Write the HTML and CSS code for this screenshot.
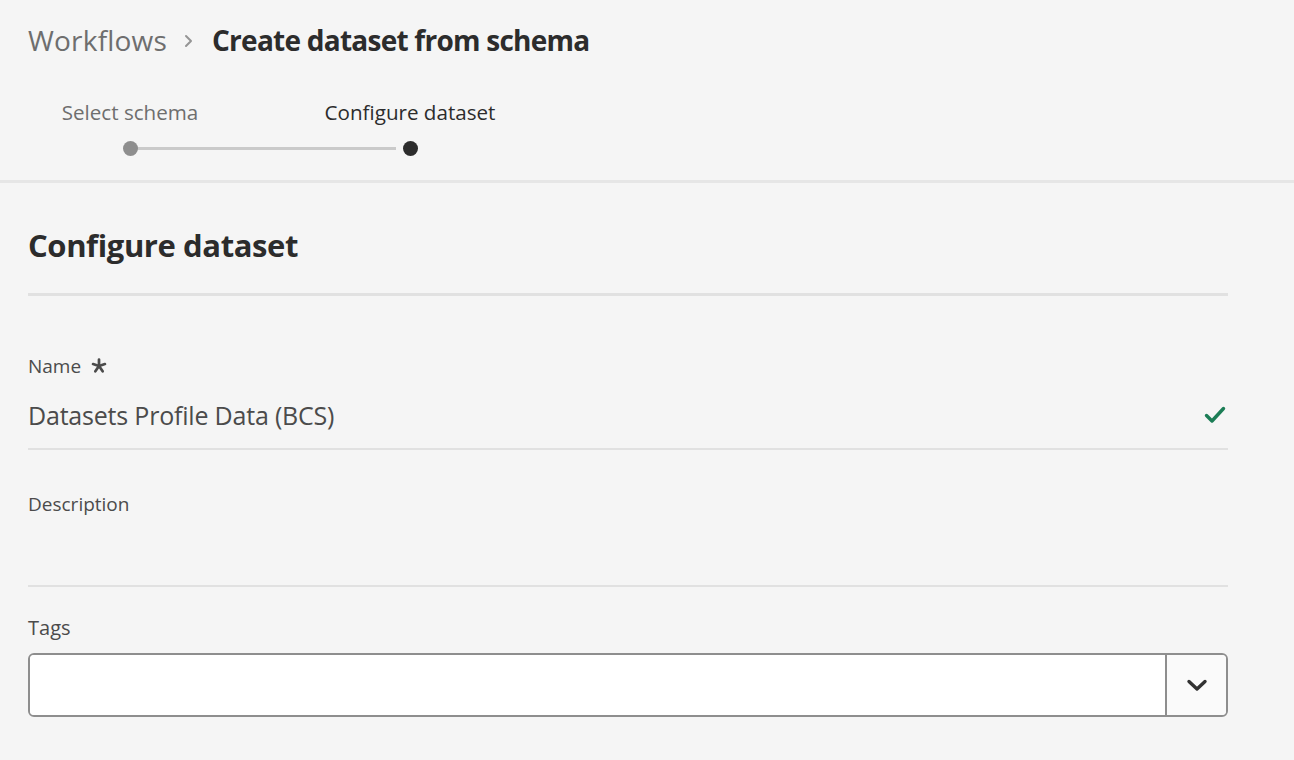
FILE: index.html
```html
<!DOCTYPE html>
<html lang="en">
<head>
<meta charset="utf-8">
<title>Create dataset from schema</title>
<link rel="stylesheet" href="styles.css">
</head>
<body>
<header class="header">
  <nav class="breadcrumb">
    <span class="crumb">Workflows</span>
    <svg class="crumb-sep" width="10" height="14" viewBox="0 0 10 14"><path d="M2 2 L7 7 L2 12" fill="none" stroke="#959595" stroke-width="2" stroke-linecap="round" stroke-linejoin="round"/></svg>
    <span class="crumb-current">Create dataset from schema</span>
  </nav>
  <div class="stepper">
    <div class="step step-done">
      <span class="step-label">Select schema</span>
      <span class="step-dot"></span>
    </div>
    <div class="step-line"></div>
    <div class="step step-current">
      <span class="step-label">Configure dataset</span>
      <span class="step-dot"></span>
    </div>
  </div>
</header>
<main class="content">
  <h1 class="section-title">Configure dataset</h1>
  <div class="field field-name">
    <label class="field-label">Name <svg class="req" width="16" height="16" viewBox="0 0 14 14"><g stroke="#4b4b4b" stroke-width="2.4" stroke-linecap="round"><path d="M7 1.5 V7"/><path d="M7 7 L1.8 5.3"/><path d="M7 7 L12.2 5.3"/><path d="M7 7 L3.8 11.6"/><path d="M7 7 L10.2 11.6"/></g></svg></label>
    <div class="field-input">
      <span class="field-value">Datasets Profile Data (BCS)</span>
      <svg class="check" width="22" height="18" viewBox="0 0 22 18"><path d="M2.5 9.5 L8 15 L19.5 2.5" fill="none" stroke="#1c7d56" stroke-width="3.4" stroke-linecap="round" stroke-linejoin="round"/></svg>
    </div>
  </div>
  <div class="field field-desc">
    <label class="field-label">Description</label>
    <div class="field-input field-input-empty"></div>
  </div>
  <div class="field field-tags">
    <label class="field-label field-label-tags">Tags</label>
    <div class="combobox">
      <div class="combo-input"></div>
      <div class="combo-button">
        <svg width="22" height="13" viewBox="0 0 22 13"><path d="M3 2.5 L11 10 L19 2.5" fill="none" stroke="#323232" stroke-width="3.4" stroke-linecap="round" stroke-linejoin="round"/></svg>
      </div>
    </div>
  </div>
</main>
</body>
</html>
```

FILE: styles.css
```css
* { box-sizing: border-box; }
html, body {
  margin: 0;
  padding: 0;
  background: #f5f5f5;
  font-family: "Open Sans", "Noto Sans", sans-serif;
  color: #2c2c2c;
}
.header {
  padding: 18px 28px 0;
  height: 183px;
  border-bottom: 3px solid #e6e6e6;
}
.breadcrumb {
  display: flex;
  align-items: center;
  height: 44px;
}
.crumb {
  font-size: 28px;
  color: #6e6e6e;
  letter-spacing: 0.2px;
}
.crumb-sep {
  margin: 2px 18px 0 17px;
}
.crumb-current {
  font-size: 28px;
  font-weight: 700;
  color: #2c2c2c;
  letter-spacing: -0.75px;
}
.stepper {
  display: flex;
  align-items: flex-end;
  margin-top: 36px;
  margin-left: 32px;
}
.step {
  display: flex;
  flex-direction: column;
  align-items: center;
  width: 140px;
}
.step-current { width: 154px; }
.step-label {
  font-size: 20.6px;
  line-height: 28px;
  color: #6e6e6e;
  white-space: nowrap;
}
.step-current .step-label { color: #2c2c2c; }
.step-dot {
  width: 15px;
  height: 15px;
  border-radius: 50%;
  background: #8e8e8e;
  margin-top: 15px;
}
.step-current .step-dot { background: #2c2c2c; }
.step-done .step-dot { position: relative; z-index: 1; }
.step-line {
  height: 3px;
  background: #cacaca;
  width: 259px;
  flex: 0 0 259px;
  margin: 0 -63px 6px -63px;
}
.content {
  padding: 0 66px 0 28px;
}
.section-title {
  margin: 0;
  padding: 40px 0 26px;
  font-size: 31px;
  line-height: 44px;
  font-weight: 700;
  letter-spacing: -0.4px;
  color: #2c2c2c;
  border-bottom: 3px solid #e1e1e1;
}
.field-label {
  display: flex;
  align-items: center;
  gap: 10px;
  font-size: 19px;
  line-height: 26px;
  color: #4b4b4b;
}
.field-label-tags { font-size: 20px; }
.field-name { padding-top: 57px; }
.field-input {
  display: flex;
  align-items: center;
  justify-content: space-between;
  height: 71px;
  padding-top: 3px;
  border-bottom: 2px solid #e1e1e1;
}
.field-value {
  font-size: 25px;
  color: #4b4b4b;
  letter-spacing: -0.2px;
}
.check { margin-right: 2px; }
.field-desc { padding-top: 41px; }
.field-input-empty { height: 70px; }
.field-tags { padding-top: 28px; }
.combobox {
  display: flex;
  height: 64px;
  margin-top: 12px;
  border: 2px solid #8e8e8e;
  border-radius: 6px;
  overflow: hidden;
}
.combo-input {
  flex: 1;
  background: #ffffff;
}
.combo-button {
  width: 61px;
  display: flex;
  align-items: center;
  justify-content: center;
  background: #fafafa;
  border-left: 2px solid #8e8e8e;
}
```
